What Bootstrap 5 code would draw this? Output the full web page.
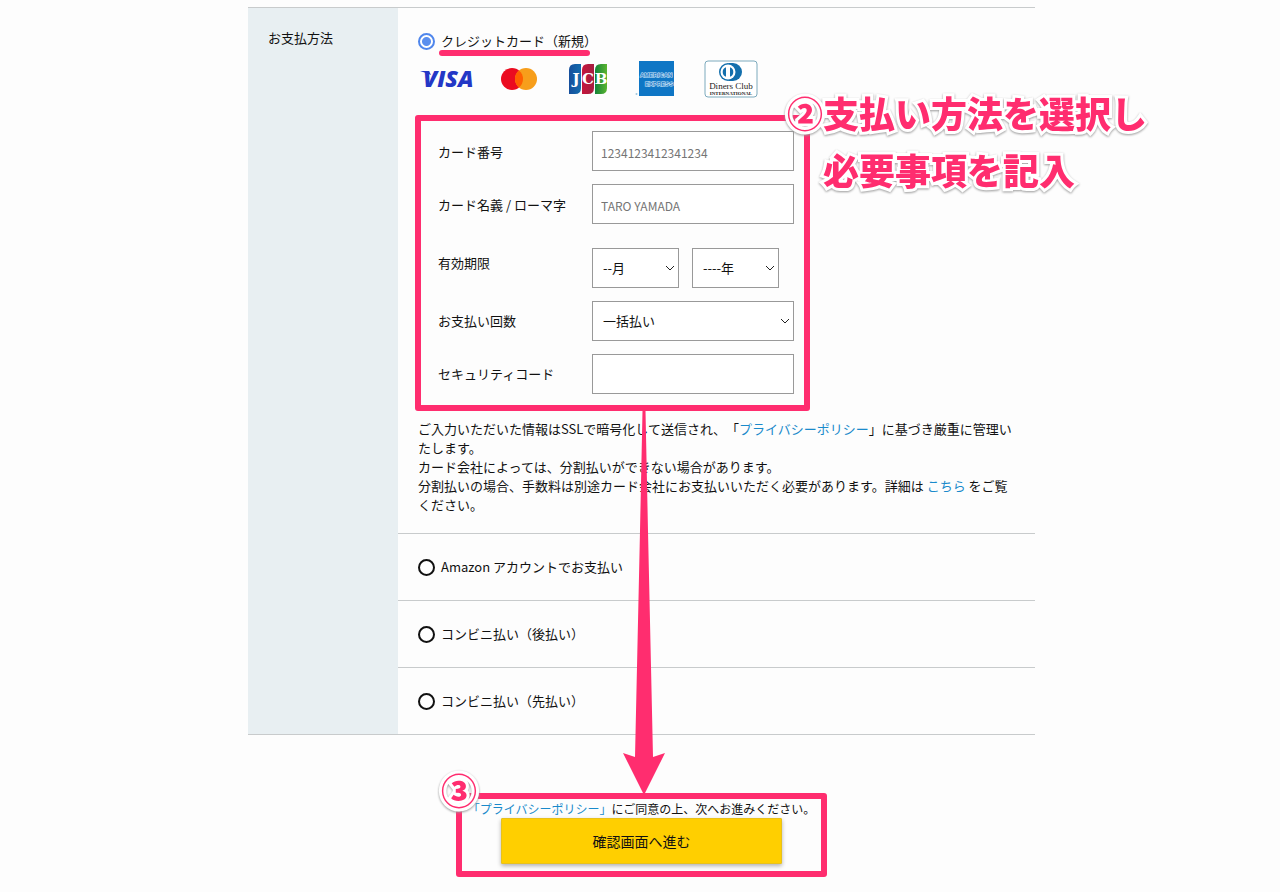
<!DOCTYPE html>
<html lang="ja">
<head>
<meta charset="utf-8">
<meta name="viewport" content="width=device-width, initial-scale=1">
<title>お支払方法</title>
<link href="https://cdn.jsdelivr.net/npm/bootstrap@5.3.0/dist/css/bootstrap.min.css" rel="stylesheet">
<style>
  :root { --pink: #ff2d6f; --rule: #c8cbcc; }
  body {
    font-family: "Noto Sans CJK JP", "Noto Sans", sans-serif;
    font-size: 13px; line-height: 19px; color: #111; background: #fdfdfd;
    padding-left: 3px; text-spacing-trim: space-all;
  }
  a { color: #1a8acb; text-decoration: none; }
  .checkout { max-width: 787px; padding-top: 7px; }
  .pay { border-top: 1px solid var(--rule); border-bottom: 1px solid var(--rule); }
  .pay-head { flex: 0 0 150px; background: #e8eff2; padding: 20px; font-size: 13px; line-height: 19px; }
  .pay-option { padding: 23px 20px 0 20px; }
  .pay-option + .pay-option { border-top: 1px solid var(--rule); padding: 23px 20px; }
  .pay-option .form-check { min-height: 20px; gap: 6px; }
  .pay-option .form-check label { line-height: 18px; }
  .form-check .form-check-input {
    float: none; margin: 0; width: 17px; height: 17px; flex: none;
    border: 2px solid #111; background: #fff; box-shadow: none;
  }
  .form-check .form-check-input:checked {
    border-color: #4f86ec;
    background: radial-gradient(circle, #5b8fee 4px, #fff 5px);
  }
  .brands { height: 40px; margin-top: 8px; gap: 27px; padding-left: 2px; }

  /* annotation frames */
  .marked::before {
    content: ""; position: absolute; inset: 0; pointer-events: none;
    border: 6px solid var(--pink); border-radius: 3px;
  }
  .underlined::after {
    content: ""; position: absolute; left: -2px; right: 7px; top: 18px; height: 6px;
    border-radius: 3px; background: var(--pink);
  }
  .card-form { width: 395px; max-width: 100%; margin: 16px 0 8px -3px; padding: 16px 16px 17px 23px; }
  .card-form .line { display: flex; }
  .card-form .line > .name { flex: 0 0 154px; padding-top: 11px; }
  .card-form .line + .line { margin-top: 13px; }
  .card-form .line.expiry { margin-top: 24px; }
  .card-form .line.expiry > .name { padding-top: 5px; }
  .card-form .expiry ~ .line > .name { padding-top: 10px; }
  .card-form .form-control, .card-form .form-select {
    height: 40px; font-size: 13px; line-height: 19px; color: #111; background-color: #fff;
    border: 1px solid #999; border-radius: 0; padding: 6px 8px;
  }
  .card-form .form-control { padding-top: 8px; font-size: 12px; }
  .card-form .form-control::placeholder { color: #757575; }
  .card-form .form-select {
    padding: 5px 20px 7px 10px;
    background-image: url("data:image/svg+xml,%3Csvg xmlns='http://www.w3.org/2000/svg' viewBox='0 0 10 10'%3E%3Cpath d='M1 3l4 4 4-4' fill='none' stroke='%23222'/%3E%3C/svg%3E");
    background-size: 10px 10px; background-position: right 3px center;
  }
  .card-form .half { width: 87px; }
  .card-form .half + .half { margin-left: 13px; }
  .notes { padding-bottom: 19px; }

  .callout {
    position: absolute; color: var(--pink); font-weight: 900; font-size: 36px; line-height: 57px;
    white-space: nowrap; z-index: 3;
    -webkit-text-stroke: 6px #fff; paint-order: stroke fill; stroke-linejoin: round;
    filter: drop-shadow(0 1px 1px #999);
  }
  .callout .indent { padding-left: 36px; }
  .callout-select { left: 372px; top: -31px; }
  .callout-confirm { left: -15px; top: -32px; }
  .arrow { position: absolute; left: 208px; top: 100%; width: 42px; height: 385px; z-index: 2; pointer-events: none; }

  .confirm { width: 371px; max-width: 100%; margin: 58px auto 0; padding: 7px 6px 13px; font-size: 12px; line-height: 18px; }
  .btn-go {
    width: 281px; height: 46px; background: #ffcf00; color: #111; border: 1px solid #e8c11c;
    border-radius: 1px; font-size: 14px; line-height: 20px; box-shadow: 0 2px 4px rgba(0,0,0,.3);
  }
  .btn-go:hover { background: #f5c600; }
</style>
</head>
<body>
<main class="checkout mx-auto">
  <form>
    <section class="pay d-flex">
      <h2 class="pay-head mb-0 fw-normal">お支払方法</h2>
      <div class="flex-fill">
        <div class="pay-option">
          <div class="form-check d-flex align-items-center p-0 m-0">
            <input class="form-check-input" type="radio" name="pay" id="pay-card" checked>
            <label class="underlined position-relative" for="pay-card">クレジットカード（新規）</label>
          </div>

          <div class="brands d-flex align-items-center">
            <svg width="54" height="32" viewBox="0 0 54 32" role="img" aria-label="VISA">
              <path d="M0 8h9l2 4-5-2z" fill="#2337c6"/>
              <text x="3" y="24" font-family="Open Sans" font-weight="800" font-style="italic" font-size="23" fill="#2337c6">VISA</text>
            </svg>
            <svg width="36" height="24" viewBox="0 0 36 24" class="me-1" role="img" aria-label="Mastercard">
              <circle cx="11" cy="12" r="11" fill="#eb0b20"/><circle cx="25" cy="12" r="11" fill="#f79e1b"/>
              <path d="M18 3.500a11 11 0 0 1 0 17 11 11 0 0 1 0-17z" fill="#ff5f00"/>
            </svg>
            <svg width="40" height="30" viewBox="0 0 40 30" role="img" aria-label="JCB">
              <defs>
                <linearGradient id="jb"><stop stop-color="#164f9c"/><stop offset="1" stop-color="#126cae"/></linearGradient>
                <linearGradient id="jr"><stop stop-color="#c5163c"/><stop offset="1" stop-color="#a51e41"/></linearGradient>
                <linearGradient id="jg"><stop stop-color="#148339"/><stop offset="1" stop-color="#5bb531"/></linearGradient>
              </defs>
              <path d="M1 6q0-6 6-6h6v24q0 6-6 6H1z" fill="url(#jb)"/>
              <path d="M14 6q0-6 6-6h6v24q0 6-6 6h-6z" fill="url(#jr)"/>
              <path d="M27 6q0-6 6-6h6v24q0 6-6 6h-6z" fill="url(#jg)"/>
              <g fill="#fff" font-family="DejaVu Serif" font-weight="700" font-size="15" text-anchor="middle">
                <text x="8" y="20">J</text><text x="20" y="20">C</text><text x="33" y="20">B</text>
              </g>
            </svg>
            <svg width="42" height="36" viewBox="0 0 42 36" role="img" aria-label="American Express">
              <path d="M4 0h35v35H4z" fill="#0f76c5"/>
              <g fill="#1a7bc8" stroke="#d5eafa" stroke-width="1" paint-order="stroke" font-family="Liberation Sans" font-weight="700">
                <text x="5" y="16" font-size="6">AMERICAN</text><text x="10" y="25" font-size="6">EXPRESS</text>
              </g>
              <circle cx="1.500" cy="33" r="1" fill="#9cc6df"/>
            </svg>
            <svg width="54" height="38" viewBox="0 0 54 38" role="img" aria-label="Diners Club International">
              <rect x="1" y="1" width="52" height="36" rx="3" fill="#fff" stroke="#7daabd"/>
              <path d="M25 3h4a9 9 0 0 1 0 18h-4z" fill="#1470ad"/>
              <circle cx="24" cy="12" r="9" fill="#1470ad"/><circle cx="24" cy="12" r="7.500" fill="#fff"/>
              <path d="M22 7.300a5 5 0 0 0 0 9.400zM26 7.300a5 5 0 0 1 0 9.400z" fill="#1470ad"/>
              <g font-family="Liberation Serif" fill="#222" text-anchor="middle">
                <text x="27" y="29" font-size="9">Diners Club</text>
                <text x="27" y="35" font-size="5" font-weight="700">INTERNATIONAL</text>
              </g>
            </svg>
          </div>

          <div class="card-form marked position-relative">
            <div class="line">
              <label class="name" for="num">カード番号</label>
              <input class="form-control" id="num" type="text" placeholder="1234123412341234">
            </div>
            <div class="line">
              <label class="name" for="holder">カード名義 / ローマ字</label>
              <input class="form-control" id="holder" type="text" placeholder="TARO YAMADA">
            </div>
            <div class="line expiry">
              <label class="name" for="month">有効期限</label>
              <select class="form-select half" id="month"><option>--月</option></select>
              <select class="form-select half" id="year" aria-label="年"><option>----年</option></select>
            </div>
            <div class="line">
              <label class="name" for="times">お支払い回数</label>
              <select class="form-select" id="times"><option>一括払い</option></select>
            </div>
            <div class="line">
              <label class="name" for="code">セキュリティコード</label>
              <input class="form-control" id="code" type="text">
            </div>
            <div class="callout callout-select">
              <div>②支払い方法を選択し</div>
              <div class="indent">必要事項を記入</div>
            </div>
            <svg class="arrow" viewBox="0 0 42 385" aria-hidden="true">
              <path d="M19.500 0h3L25 120 30 346l12-4-21 42L0 342l12 4L17 120z" fill="#ff2d6f"/>
            </svg>
          </div>

          <div class="notes">
            ご入力いただいた情報はSSLで暗号化して送信され、「<a href="#privacy">プライバシーポリシー</a>」に基づき厳重に管理いたします。<br>
            カード会社によっては、分割払いができない場合があります。<br>
            分割払いの場合、手数料は別途カード会社にお支払いいただく必要があります。詳細は <a href="#detail">こちら</a> をご覧ください。
          </div>
        </div>
        <div class="pay-option">
          <div class="form-check d-flex align-items-center p-0 m-0">
            <input class="form-check-input" type="radio" name="pay" id="pay-amazon">
            <label for="pay-amazon">Amazon アカウントでお支払い</label>
          </div>
        </div>
        <div class="pay-option">
          <div class="form-check d-flex align-items-center p-0 m-0">
            <input class="form-check-input" type="radio" name="pay" id="pay-later">
            <label for="pay-later">コンビニ払い（後払い）</label>
          </div>
        </div>
        <div class="pay-option">
          <div class="form-check d-flex align-items-center p-0 m-0">
            <input class="form-check-input" type="radio" name="pay" id="pay-before">
            <label for="pay-before">コンビニ払い（先払い）</label>
          </div>
        </div>
      </div>
    </section>

    <div class="confirm marked position-relative text-center">
      <div class="text-nowrap"><a href="#privacy">「プライバシーポリシー」</a>にご同意の上、次へお進みください。</div>
      <button class="btn btn-go p-0" type="submit">確認画面へ進む</button>
      <div class="callout callout-confirm">③</div>
    </div>
  </form>
</main>
<script src="https://cdn.jsdelivr.net/npm/bootstrap@5.3.0/dist/js/bootstrap.bundle.min.js"></script>
</body>
</html>
